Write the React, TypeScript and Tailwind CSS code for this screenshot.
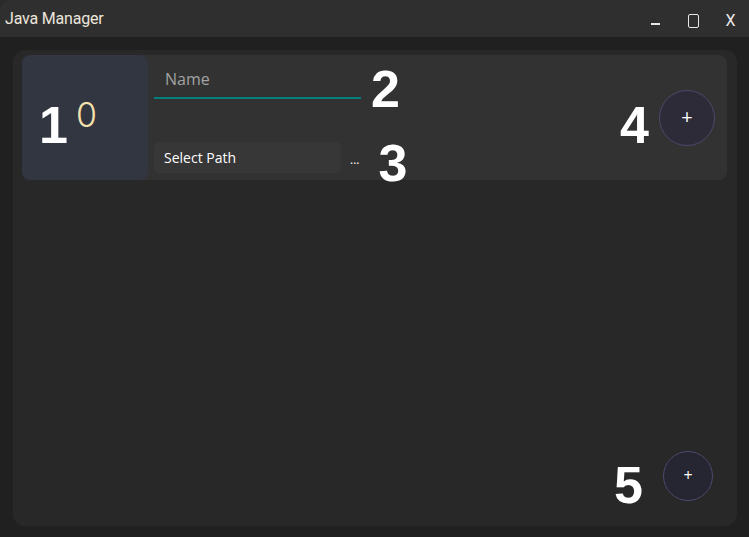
import React from "react";

const num = "font-['Liberation_Sans',Arial,sans-serif] font-bold text-white text-[52px] leading-none";

export default function App() {
  return (
    <div className="w-[749px] h-[537px] bg-[#2a2a2a] overflow-hidden font-['Liberation_Sans',Arial,sans-serif]">
      <div className="w-full h-full flex flex-col rounded-tl-[10px] overflow-hidden bg-[#202020]">
        {/* title bar */}
        <div className="h-[37px] shrink-0 bg-[#2f2f2f] flex items-center pl-[5px]">
          <span className="text-[16px] text-[#ece6dc] font-['Roboto',sans-serif] tracking-[-0.2px]">Java Manager</span>
          <div className="flex-1" />
          <div className="flex items-center h-full">
            <div className="w-[38px] h-full flex items-center justify-center pt-[11px] pl-[2px]">
              <div className="w-[9px] h-[1.5px] bg-[#e8e8e8]" />
            </div>
            <div className="w-[38px] h-full flex items-center justify-center pt-[5px] pl-[2px]">
              <div className="w-[11px] h-[14px] border-[1.5px] border-[#e8e8e8] rounded-[2px]" />
            </div>
            <div className="w-[38px] h-full flex items-center justify-center pt-[5px] pl-[1px] text-[16px] text-[#e8e8e8] font-['Roboto',sans-serif]">
              X
            </div>
          </div>
        </div>
        {/* content */}
        <div className="flex-1 pt-[13px] pl-[13px] pr-[12px] pb-[11px] flex">
          <div className="flex-1 bg-[#282828] rounded-[12px] flex flex-col pt-[5px] pl-[9px] pr-[10px]">
            {/* card */}
            <div className="h-[125px] shrink-0 bg-[#323232] rounded-[8px] flex">
              <div className="w-[126px] h-full bg-[#323641] rounded-[8px] flex items-start pl-[17px] pt-[44px]">
                <span className={num}>1</span>
                <span className="ml-[8px] mt-[-1px] text-[34px] leading-none font-light text-[#f7e2ad] font-['Inter',sans-serif]">0</span>
              </div>
              <div className="flex flex-col pl-[6px]">
                <div className="flex items-start pt-[9px] h-[87px] shrink-0">
                  <div className="w-[207px] h-[35px] border-b-2 border-[#03807c] flex items-center pl-[11px] pb-[3px]">
                    <span className="text-[16px] text-[#a3a3a3] font-['Open_Sans',sans-serif]">Name</span>
                  </div>
                  <span className={num + " ml-[10px] mt-[-1px]"}>2</span>
                </div>
                <div className="flex items-start h-[31px] shrink-0">
                  <div className="w-[187px] h-[31px] bg-[#373737] rounded-[5px] flex items-center pl-[10px]">
                    <span className="text-[14px] text-white font-['Open_Sans',sans-serif]">Select Path</span>
                  </div>
                  <span className="ml-[9px] mt-[9px] text-[12px] text-white font-['Open_Sans',sans-serif]">...</span>
                  <span className={num + " ml-[19px] mt-[-5px]"}>3</span>
                </div>
              </div>
              <div className="flex-1" />
              <div className="flex items-start pr-[12px] pt-[35px]">
                <span className={num + " mr-[10px] mt-[9px]"}>4</span>
                <div className="w-[56px] h-[56px] shrink-0 rounded-full bg-[#2c2b37] border-[1.5px] border-[#4c496c] flex items-center justify-center">
                  <span className="text-[20px] text-white leading-none font-['Open_Sans',sans-serif] mt-[-2px]">+</span>
                </div>
              </div>
            </div>
            <div className="flex-1" />
            <div className="flex items-start justify-end h-[50px] shrink-0 pr-[14px] mb-[25px]">
              <span className={num + " mr-[20px] mt-[8px]"}>5</span>
              <div className="w-[50px] h-[50px] shrink-0 rounded-full bg-[#262532] border-[1.5px] border-[#4c496c] flex items-center justify-center">
                <span className="text-[16px] text-white leading-none font-['Open_Sans',sans-serif] mt-[-2px]">+</span>
              </div>
            </div>
          </div>
        </div>
      </div>
    </div>
  );
}
